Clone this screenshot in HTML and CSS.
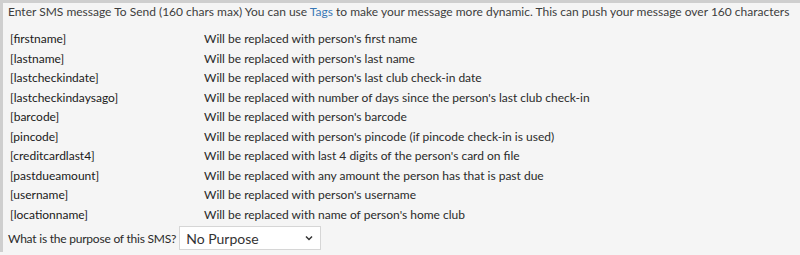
FILE: index.html
```html
<!DOCTYPE html>
<html>
<head>
<meta charset="utf-8">
<link rel="stylesheet" href="styles.css">
</head>
<body>
<div class="panel">
  <div class="intro">Enter SMS message To Send (160 chars max) You can use <a class="link" href="#">Tags</a> to make your message more dynamic. This can push your message over 160 characters</div>
  <div class="tags">
    <div class="tag">[firstname]</div><div class="desc">Will be replaced with person's first name</div>
    <div class="tag">[lastname]</div><div class="desc">Will be replaced with person's last name</div>
    <div class="tag">[lastcheckindate]</div><div class="desc">Will be replaced with person's last club check-in date</div>
    <div class="tag">[lastcheckindaysago]</div><div class="desc">Will be replaced with number of days since the person's last club check-in</div>
    <div class="tag">[barcode]</div><div class="desc">Will be replaced with person's barcode</div>
    <div class="tag">[pincode]</div><div class="desc">Will be replaced with person's pincode (if pincode check-in is used)</div>
    <div class="tag">[creditcardlast4]</div><div class="desc">Will be replaced with last 4 digits of the person's card on file</div>
    <div class="tag">[pastdueamount]</div><div class="desc">Will be replaced with any amount the person has that is past due</div>
    <div class="tag">[username]</div><div class="desc">Will be replaced with person's username</div>
    <div class="tag">[locationname]</div><div class="desc">Will be replaced with name of person's home club</div>
  </div>
  <div class="purpose">
    <span class="label">What is the purpose of this SMS?</span>
    <div class="select">
      <span>No Purpose</span>
      <svg width="8" height="6" viewBox="0 0 8 6"><path d="M1 1.5 L4 4.5 L7 1.5" fill="none" stroke="#333" stroke-width="1.5"/></svg>
    </div>
  </div>
</div>
</body>
</html>
```
FILE: styles.css
```css
html, body {
  margin: 0;
  padding: 0;
  background: #f5f5f5;
}
body {
  font-family: Lato, "Open Sans", sans-serif;
  font-size: 12px;
  color: #222;
}
.panel {
  border-top: 3px solid #cfcfcf;
  border-left: 3px solid #cfcfcf;
  background: #f5f5f5;
  height: 252px;
  padding: 0 0 0 5px;
  box-sizing: border-box;
}
.intro {
  color: #3d3d3d;
  line-height: 18px;
  white-space: nowrap;
}
.link {
  color: #3a78b5;
  text-decoration: none;
}
.tags {
  display: grid;
  grid-template-columns: 194px 1fr;
  grid-auto-rows: 19.5px;
  margin-top: 8px;
  padding-left: 2px;
}
.tag {
  color: #1a1a1a;
  line-height: 19.5px;
}
.desc {
  color: #2a2a2a;
  line-height: 19.5px;
}
.purpose {
  display: flex;
  align-items: center;
  gap: 3px;
  margin-top: 2px;
}
.label {
  color: #2a2a2a;
  letter-spacing: -0.22px;
}
.select {
  width: 142px;
  height: 24px;
  box-sizing: border-box;
  background: #fff;
  border: 1px solid #d6d6d6;
  display: flex;
  align-items: center;
  justify-content: space-between;
  padding: 0 7px 0 6px;
  font-size: 14px;
  color: #333;
}
```
